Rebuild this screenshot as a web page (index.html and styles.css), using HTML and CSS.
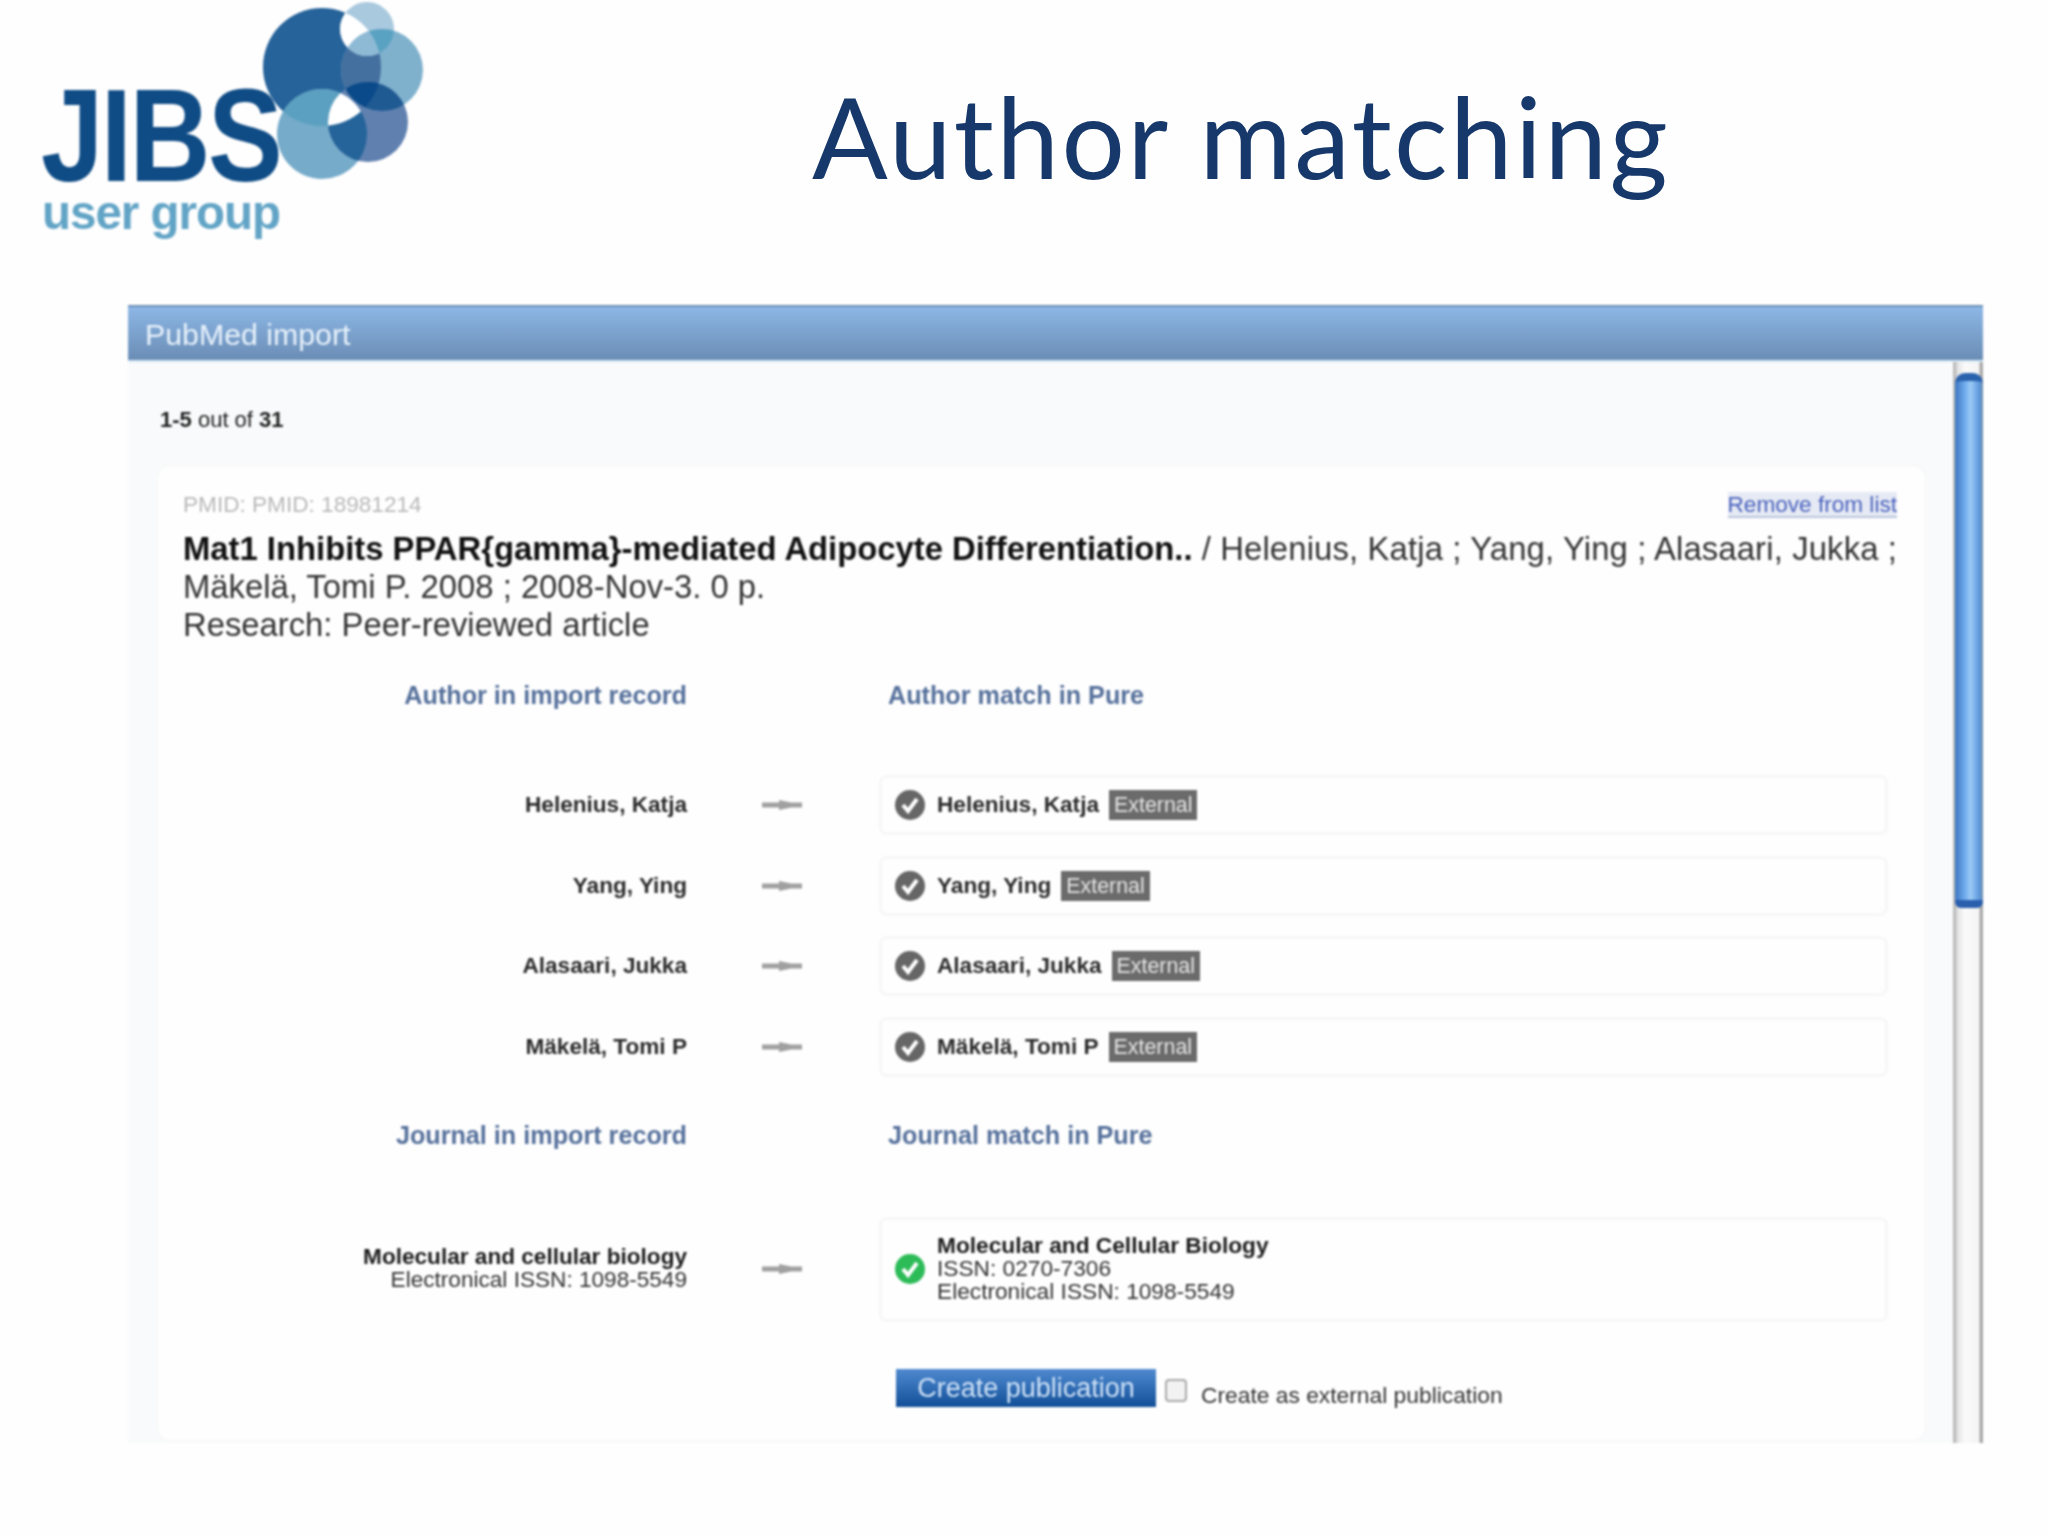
FILE: index.html
```html
<!DOCTYPE html>
<html lang="en">
<head>
<meta charset="utf-8">
<title>Author matching</title>
<link rel="stylesheet" href="styles.css">
</head>
<body>
<div class="slide">
  <header class="slide-head">
    <div class="logo">
      <svg class="logo-art" viewBox="0 0 460 260" width="460" height="260" aria-hidden="true">
        <defs>
          <clipPath id="c-big"><circle cx="322" cy="67" r="59"/></clipPath>
          <clipPath id="c-top"><circle cx="367" cy="29" r="27"/></clipPath>
          <clipPath id="c-right"><circle cx="382" cy="70" r="41"/></clipPath>
          <clipPath id="c-botl"><circle cx="322" cy="134" r="45"/></clipPath>
          <clipPath id="c-botr"><circle cx="368" cy="122" r="40"/></clipPath>
        </defs>
        <circle cx="322" cy="67" r="59" fill="#26639a"/>
        <circle cx="367" cy="29" r="27" fill="#a9c9de"/>
        <circle cx="382" cy="70" r="41" fill="#7fb1cd"/>
        <circle cx="322" cy="134" r="45" fill="#76abca"/>
        <circle cx="368" cy="122" r="40" fill="#6081b0"/>
        <g clip-path="url(#c-big)">
          <circle cx="382" cy="70" r="41" fill="#44709f"/>
          <circle cx="367" cy="29" r="27" fill="#fff"/>
          <circle cx="322" cy="134" r="45" fill="#5ba0c0"/>
        </g>
        <g clip-path="url(#c-right)">
          <circle cx="367" cy="29" r="27" fill="#5aa2c2"/>
          <circle cx="368" cy="122" r="40" fill="#1f5a92"/>
        </g>
        <g clip-path="url(#c-botl)">
          <circle cx="368" cy="122" r="40" fill="#25649a"/>
        </g>
        <g clip-path="url(#c-big)">
          <g clip-path="url(#c-top)"><circle cx="382" cy="70" r="41" fill="#8fbad5"/></g>
          <g clip-path="url(#c-botr)"><circle cx="382" cy="70" r="41" fill="#0a4a8a"/></g>
          <g clip-path="url(#c-botl)"><circle cx="368" cy="122" r="40" fill="#fff"/></g>
        </g>
      </svg>
      <span class="logo-jibs">JIBS</span>
      <span class="logo-sub">user group</span>
    </div>
    <h1 class="slide-title">Author matching</h1>
  </header>

  <section class="panel">
    <div class="panel-bar">PubMed import</div>
    <div class="panel-main">
      <div class="panel-content">
        <div class="count"><b>1-5</b> out of <b>31</b></div>
        <article class="card">
          <div class="meta">
            <span class="pmid">PMID: PMID: 18981214</span>
            <a class="remove" href="#">Remove from list</a>
          </div>
          <p class="citation"><b>Mat1 Inhibits PPAR{gamma}-mediated Adipocyte Differentiation..</b> <span class="authors">/ Helenius, Katja ; Yang, Ying ; Alasaari, Jukka ;</span><br>Mäkelä, Tomi P. 2008 ; 2008-Nov-3. 0 p.<br>Research: Peer-reviewed article</p>

          <div class="match-head">
            <span class="head-left">Author in import record</span>
            <span class="head-right">Author match in Pure</span>
          </div>
          <div class="rows">
            <div class="row">
              <span class="row-name">Helenius, Katja</span>
              <svg class="arrow" viewBox="0 0 40 14" width="40" height="14"><path d="M0 4.5H17V2L29 4.5H40V9.5H29L17 12V9.5H0Z" fill="#a0a0a0"/></svg>
              <div class="match-box">
                <svg class="check" viewBox="0 0 30 30" width="30" height="30"><circle cx="15" cy="15" r="15" fill="#666"/><path d="M8 15l5 6 9-12" fill="none" stroke="#fff" stroke-width="4"/></svg>
                <span class="match-name">Helenius, Katja</span><span class="tag">External</span>
              </div>
            </div>
            <div class="row">
              <span class="row-name">Yang, Ying</span>
              <svg class="arrow" viewBox="0 0 40 14" width="40" height="14"><path d="M0 4.5H17V2L29 4.5H40V9.5H29L17 12V9.5H0Z" fill="#a0a0a0"/></svg>
              <div class="match-box">
                <svg class="check" viewBox="0 0 30 30" width="30" height="30"><circle cx="15" cy="15" r="15" fill="#666"/><path d="M8 15l5 6 9-12" fill="none" stroke="#fff" stroke-width="4"/></svg>
                <span class="match-name">Yang, Ying</span><span class="tag">External</span>
              </div>
            </div>
            <div class="row">
              <span class="row-name">Alasaari, Jukka</span>
              <svg class="arrow" viewBox="0 0 40 14" width="40" height="14"><path d="M0 4.5H17V2L29 4.5H40V9.5H29L17 12V9.5H0Z" fill="#a0a0a0"/></svg>
              <div class="match-box">
                <svg class="check" viewBox="0 0 30 30" width="30" height="30"><circle cx="15" cy="15" r="15" fill="#666"/><path d="M8 15l5 6 9-12" fill="none" stroke="#fff" stroke-width="4"/></svg>
                <span class="match-name">Alasaari, Jukka</span><span class="tag">External</span>
              </div>
            </div>
            <div class="row">
              <span class="row-name">Mäkelä, Tomi P</span>
              <svg class="arrow" viewBox="0 0 40 14" width="40" height="14"><path d="M0 4.5H17V2L29 4.5H40V9.5H29L17 12V9.5H0Z" fill="#a0a0a0"/></svg>
              <div class="match-box">
                <svg class="check" viewBox="0 0 30 30" width="30" height="30"><circle cx="15" cy="15" r="15" fill="#666"/><path d="M8 15l5 6 9-12" fill="none" stroke="#fff" stroke-width="4"/></svg>
                <span class="match-name">Mäkelä, Tomi P</span><span class="tag">External</span>
              </div>
            </div>
          </div>

          <div class="match-head journal-head">
            <span class="head-left">Journal in import record</span>
            <span class="head-right">Journal match in Pure</span>
          </div>
          <div class="row journal-row">
            <div class="journal-left"><b>Molecular and cellular biology</b><br>Electronical ISSN: 1098-5549</div>
            <svg class="arrow" viewBox="0 0 40 14" width="40" height="14"><path d="M0 4.5H17V2L29 4.5H40V9.5H29L17 12V9.5H0Z" fill="#a0a0a0"/></svg>
            <div class="match-box journal-box">
              <svg class="check" viewBox="0 0 30 30" width="30" height="30"><circle cx="15" cy="15" r="15" fill="#2dbb58"/><path d="M8 15l5 6 9-12" fill="none" stroke="#fff" stroke-width="4"/></svg>
              <div class="journal-text"><b>Molecular and Cellular Biology</b><br>ISSN: 0270-7306<br>Electronical ISSN: 1098-5549</div>
            </div>
          </div>

          <div class="actions">
            <button class="create" type="button">Create publication</button>
            <span class="fake-check"></span>
            <span class="external-label">Create as external publication</span>
          </div>
        </article>
      </div>
      <div class="scroll"><div class="thumb"></div></div>
    </div>
  </section>
</div>
</body>
</html>
```

FILE: styles.css
```css
* { box-sizing: border-box; }
html, body { margin: 0; padding: 0; background: #fefefe; }
body { font-family: "Liberation Sans", Arial, sans-serif; color: #222; }
.slide { width: 2048px; height: 1536px; overflow: hidden; }

.slide-head { height: 305px; display: flex; align-items: flex-start; }
.logo { position: relative; width: 460px; height: 260px; flex: none; filter: blur(0.8px); }
.logo-art { display: block; }
.logo-jibs { position: absolute; left: 41px; top: 88px; font-size: 132px; line-height: 96px; font-weight: 700; color: #0f4c86; letter-spacing: -3px; transform: scaleX(0.85); transform-origin: left top; }
.logo-sub { position: absolute; left: 42px; top: 188px; font-size: 47.5px; line-height: 50px; font-weight: 700; color: #62a4c6; letter-spacing: -1px; }
.slide-title { margin: 66px 0 0 352px; font-family: Lato, "Open Sans", sans-serif; font-weight: 400; font-size: 112px; line-height: 140px; letter-spacing: 2.5px; color: #16386a; white-space: nowrap; }

.panel { margin-left: 128px; width: 1855px; height: 1138px; display: flex; flex-direction: column; filter: blur(0.8px); }
.panel-bar { height: 57px; flex: none; padding-left: 17px; font-size: 30.3px; line-height: 56px; color: #e8f2fb; background: linear-gradient(#8db7e6, #6a8db5); border-top: 2px solid #7090b5; border-bottom: 2px solid #d4e8f5; }
.panel-main { flex: 1; display: flex; min-height: 0; background: #f9fafb; }
.panel-content { width: 1825px; padding-left: 30px; }
.count { height: 104px; padding: 45px 0 0 2px; font-size: 22px; line-height: 26px; color: #222; }
.card { width: 1767px; height: 974px; padding: 26px 28px 0 25px; background: #fefefe; border-radius: 12px; box-shadow: 0 0 2px #eee; }
.meta { display: flex; justify-content: space-between; height: 26px; font-size: 22.6px; line-height: 26px; }
.pmid { color: #b9b9b9; }
.remove { color: #4a62bd; text-decoration: none; background: #e6eaf4; border-bottom: 2px solid #bcc6dc; }
.citation { margin: 12px 0 0; font-size: 32.8px; line-height: 38px; color: #333; white-space: nowrap; }
.citation b { color: #111; }
.authors { letter-spacing: 0.15px; }

.match-head { display: flex; margin-top: 37px; height: 30px; font-size: 25.2px; line-height: 29px; font-weight: 700; color: #55709b; }
.head-left { width: 504px; text-align: right; }
.head-right { margin-left: 201px; }
.rows { margin-top: 64px; display: flex; flex-direction: column; gap: 20.5px; }
.row { display: grid; grid-template-columns: 504px 190px 1011px; align-items: center; }
.row-name { text-align: right; font-size: 22.6px; font-weight: 700; color: #2a2a2a; }
.arrow { justify-self: center; }
.match-box { height: 60px; margin-left: 2px; width: 1009px; display: flex; align-items: center; padding-left: 13px; background: #fefefe; border: 3px solid #f7f7f8; border-radius: 8px; }
.check { flex: none; margin-right: 12px; }
.match-name { font-size: 22.6px; font-weight: 700; color: #2a2a2a; margin-right: 10px; }
.tag { background: #6b6b6b; color: #e4e4e4; font-size: 21.4px; line-height: 30px; padding: 0 5px; }

.journal-head { margin-top: 44px; }
.journal-row { margin-top: 66px; }
.journal-left { text-align: right; font-size: 22.6px; line-height: 23px; color: #333; margin-top: -2px; }
.journal-left b { color: #1c1c1c; }
.journal-box { height: 105px; }
.journal-text { font-size: 22.7px; line-height: 23px; color: #333; margin-top: -1px; }
.journal-text b { color: #1c1c1c; }

.actions { display: flex; align-items: flex-start; margin: 47px 0 0 713px; }
.create { width: 260px; height: 38px; padding: 0; border: 0; font-family: "Liberation Sans", Arial, sans-serif; font-size: 27px; line-height: 38px; color: #cfe2f7; background: linear-gradient(#4f8ad0, #124f98); }
.fake-check { width: 22px; height: 23px; margin: 10px 0 0 9px; background: #f2f2f2; border: 2px solid #aaa; border-radius: 4px; }
.external-label { margin: 13px 0 0 14px; font-size: 22.8px; line-height: 26px; color: #333; }

.scroll { width: 30px; display: flex; flex-direction: column; padding-top: 11px; background: linear-gradient(90deg, #bbb 0 2px, #e6e6e6 5px, #fafafa 12px, #f4f4f4 26px, #aaa 27px); }
.thumb { height: 535px; margin-left: 2px; border-radius: 10px 10px 6px 6px; border-top: 8px solid #2a62ad; border-bottom: 8px solid #2a5fae; background: linear-gradient(90deg, #3d75c0, #6fabed 35%, #9ccbf6 55%, #5f9be0 85%, #6d8aa8); }
```
